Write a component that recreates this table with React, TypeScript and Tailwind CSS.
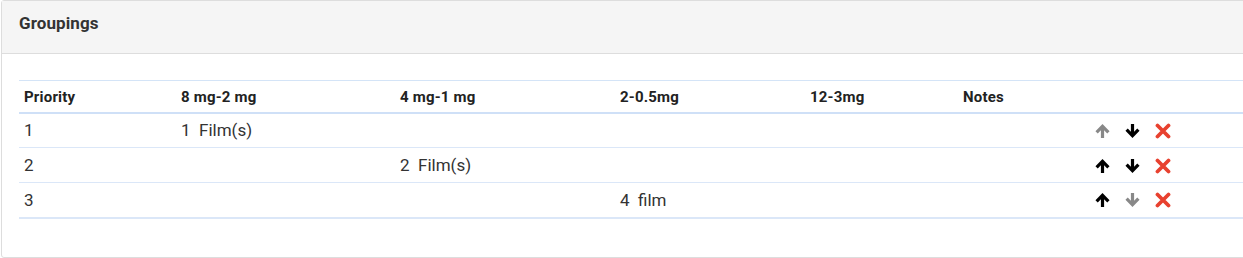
const columns = ['Priority', '8 mg-2 mg', '4 mg-1 mg', '2-0.5mg', '12-3mg', 'Notes', '']
const widths = ['w-[157px]', 'w-[219px]', 'w-[220px]', 'w-[190px]', 'w-[153px]', 'w-[130px]', 'w-[191px]']

const rows = [
  { priority: 1, cells: ['1  Film(s)', '', '', ''], up: false, down: true },
  { priority: 2, cells: ['', '2  Film(s)', '', ''], up: true, down: true },
  { priority: 3, cells: ['', '', '4  film', ''], up: true, down: false },
]

function Arrow({ down, active }: { down?: boolean; active: boolean }) {
  return (
    <svg
      viewBox="0 0 15 14"
      className={`w-[15px] h-[14px] ${active ? 'text-black' : 'text-[#888888]'} ${down ? 'rotate-180' : ''}`}
      fill="none"
      stroke="currentColor"
    >
      <path d="M7.5 14V2.5" strokeWidth="3.2" />
      <path d="M1.6 8.4L7.5 2.4L13.4 8.4" strokeWidth="3.2" strokeLinejoin="miter" />
    </svg>
  )
}

function Cross() {
  return (
    <svg viewBox="0 0 16 16" className="w-[16px] h-[16px] text-[#e8412f]" fill="none" stroke="currentColor">
      <path d="M2.5 2.5L13.5 13.5M13.5 2.5L2.5 13.5" strokeWidth="3.8" strokeLinecap="round" />
    </svg>
  )
}

export default function App() {
  return (
    <div className="w-[1243px] h-[258px] overflow-hidden bg-white font-['Roboto',sans-serif]">
      <div className="ml-[1px] w-[1270px] h-[258px] border border-[#dddddd] rounded-[3px]">
        {/* Panel header */}
        <div className="h-[53px] bg-[#f5f5f5] border-b border-[#dddddd] px-[17px] pt-[11px]">
          <h3 className="text-[17px] font-bold text-[#333333] leading-[22px] tracking-[0.1px]">Groupings</h3>
        </div>

        {/* Panel body */}
        <div className="pl-[17px] pt-[26px]">
          <table className="table-fixed border-collapse w-[1260px] text-[#222222]">
            <colgroup>
              {widths.map((w, i) => (
                <col key={i} className={w} />
              ))}
            </colgroup>
            <thead>
              <tr className="border-t border-[#d4e4f7] border-b-2 border-b-[#cfe0f7]">
                {columns.map((c, i) => (
                  <th key={i} className="text-left px-[5px] h-[32px] pt-[1px] text-[15px] tracking-[0.2px] font-bold">
                    {c}
                  </th>
                ))}
              </tr>
            </thead>
            <tbody className="text-[17px] text-[#333333]">
              {rows.map((r) => (
                <tr key={r.priority} className="border-b border-[#dbe7f8] last:border-b-2">
                  <td className="px-[5px] h-[35px] pt-[1px]">{r.priority}</td>
                  {r.cells.map((c, i) => (
                    <td key={i} className="px-[5px] pt-[1px] whitespace-pre">
                      {c}
                    </td>
                  ))}
                  <td className="px-[5px]"></td>
                  <td className="px-[5px]">
                    <div className="flex items-center gap-[15px] pl-[2px] pt-[1px]">
                      <Arrow active={r.up} />
                      <Arrow down active={r.down} />
                      <Cross />
                    </div>
                  </td>
                </tr>
              ))}
            </tbody>
          </table>
        </div>
      </div>
    </div>
  )
}
